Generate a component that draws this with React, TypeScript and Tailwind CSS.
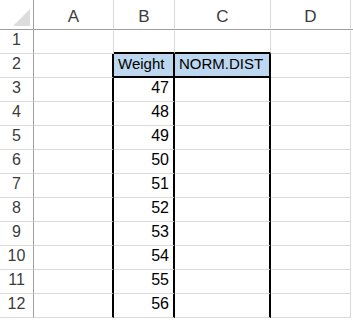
import React from "react";

const cols = ["A", "B", "C", "D"];
const weights = [47, 48, 49, 50, 51, 52, 53, 54, 55, 56];

// column widths include each cell's right gridline
const colWidth: Record<string, string> = {
  A: "w-[80px]",
  B: "w-[61px]",
  C: "w-[96px]",
  D: "w-[80px]",
};

function RowHead({ n }: { n: number }) {
  return (
    <div className="w-[34px] shrink-0 h-[24px] border-r border-b border-r-[#9e9e9e] border-b-[#d9d9d9] flex items-end justify-center pb-[1px] text-[16px] text-[#3c3c3c]">
      {n}
    </div>
  );
}

function Cell({
  col,
  children,
  className = "",
}: {
  col: string;
  children?: React.ReactNode;
  className?: string;
}) {
  return (
    <div
      className={`${colWidth[col]} shrink-0 h-[24px] border-r border-b border-[#d9d9d9] flex items-end px-[4px] pb-[1px] text-[15px] text-black ${className}`}
    >
      {children}
    </div>
  );
}

export default function App() {
  return (
    <div
      className="w-[353px] h-[320px] overflow-hidden bg-white"
      style={{ fontFamily: '"Liberation Sans", Arial, sans-serif' }}
    >
      {/* column headers */}
      <div className="flex h-[30px]">
        <div className="w-[34px] shrink-0 border-r border-b border-[#9e9e9e] relative">
          <div className="absolute right-[3px] bottom-[3px] w-0 h-0 border-l-[17px] border-l-transparent border-b-[17px] border-b-[#dcdcdc]" />
        </div>
        {cols.map((c) => (
          <div
            key={c}
            className={`${colWidth[c]} shrink-0 border-r border-r-[#d9d9d9] border-b border-b-[#9e9e9e] flex items-center justify-center pt-[4px] text-[17px] text-[#3c3c3c]`}
          >
            {c}
          </div>
        ))}
        <div className="flex-1 border-b border-b-[#9e9e9e]" />
      </div>

      {/* row 1 */}
      <div className="flex">
        <RowHead n={1} />
        <Cell col="A" />
        <Cell col="B" className="!border-b-2 !border-b-black" />
        <Cell col="C" className="!border-b-2 !border-b-black" />
        <Cell col="D" />
      </div>

      {/* row 2: header cells */}
      <div className="flex">
        <RowHead n={2} />
        <Cell col="A" className="!border-r-2 !border-r-black" />
        <Cell col="B" className="bg-[#bdd7ee] !border-r-2 !border-r-black !border-b-2 !border-b-black">
          Weight
        </Cell>
        <Cell col="C" className="bg-[#bdd7ee] !border-r-2 !border-r-black !border-b-2 !border-b-black">
          NORM.DIST
        </Cell>
        <Cell col="D" />
      </div>

      {weights.map((w, i) => (
        <div className="flex" key={w}>
          <RowHead n={i + 3} />
          <Cell col="A" className="!border-r-2 !border-r-black" />
          <Cell col="B" className="justify-end !border-r-2 !border-r-black text-[16px]">
            {w}
          </Cell>
          <Cell col="C" className="!border-r-2 !border-r-black" />
          <Cell col="D" />
        </div>
      ))}
    </div>
  );
}
